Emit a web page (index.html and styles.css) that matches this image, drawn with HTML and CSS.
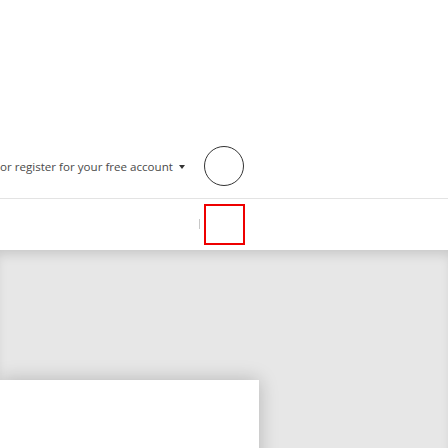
FILE: index.html
```
<!DOCTYPE html>
<html>
<head>
<meta charset="utf-8">
<link rel="stylesheet" href="styles.css">
</head>
<body>
<header class="header">
  <nav class="nav">
    <span class="register">or register for your free account<span class="caret"></span></span>
    <span class="avatar"></span>
  </nav>
</header>
<div class="toolbar">
  <span class="divider"></span>
  <span class="focus-box"></span>
</div>
<section class="stage">
  <div class="card"></div>
</section>
</body>
</html>
```
FILE: styles.css
```
html, body {
  margin: 0;
  padding: 0;
  background: #fff;
  overflow: hidden;
}
body {
  width: 448px;
  height: 448px;
  display: flex;
  flex-direction: column;
  font-family: "Open Sans", "Liberation Sans", sans-serif;
}
.header {
  height: 198px;
  border-bottom: 1px solid #e3e3e3;
  display: flex;
  flex-direction: column;
  justify-content: flex-end;
}
.nav {
  display: flex;
  align-items: center;
  padding: 0 0 12px 0;
}
.register {
  font-size: 11.6px;
  color: #4a4a4a;
  display: flex;
  align-items: center;
  white-space: nowrap;
  width: 188px;
}
.caret {
  display: inline-block;
  width: 0;
  height: 0;
  border-left: 3.5px solid transparent;
  border-right: 3.5px solid transparent;
  border-top: 4px solid #333;
  margin-left: 6px;
  margin-top: 1px;
}
.avatar {
  width: 38px;
  height: 38px;
  border: 1px solid #333;
  border-radius: 50%;
  margin-left: 16px;
}
.toolbar {
  height: 51px;
  display: flex;
  align-items: flex-start;
  padding-left: 199px;
}
.divider {
  width: 1px;
  height: 10px;
  background: #c8c8c8;
  margin-top: 20px;
  margin-right: 4px;
}
.focus-box {
  width: 37px;
  height: 37px;
  border: 2px solid #e00;
  margin-top: 5px;
}
.stage {
  flex: 1;
  background: #e7e7e7;
  box-shadow: inset 0 8px 12px -4px rgba(0,0,0,0.14);
  position: relative;
  overflow: hidden;
}
.card {
  width: 259px;
  height: 100px;
  margin-top: 130px;
  background: #fff;
  box-shadow: 0 0 18px rgba(0,0,0,0.22);
}
```
